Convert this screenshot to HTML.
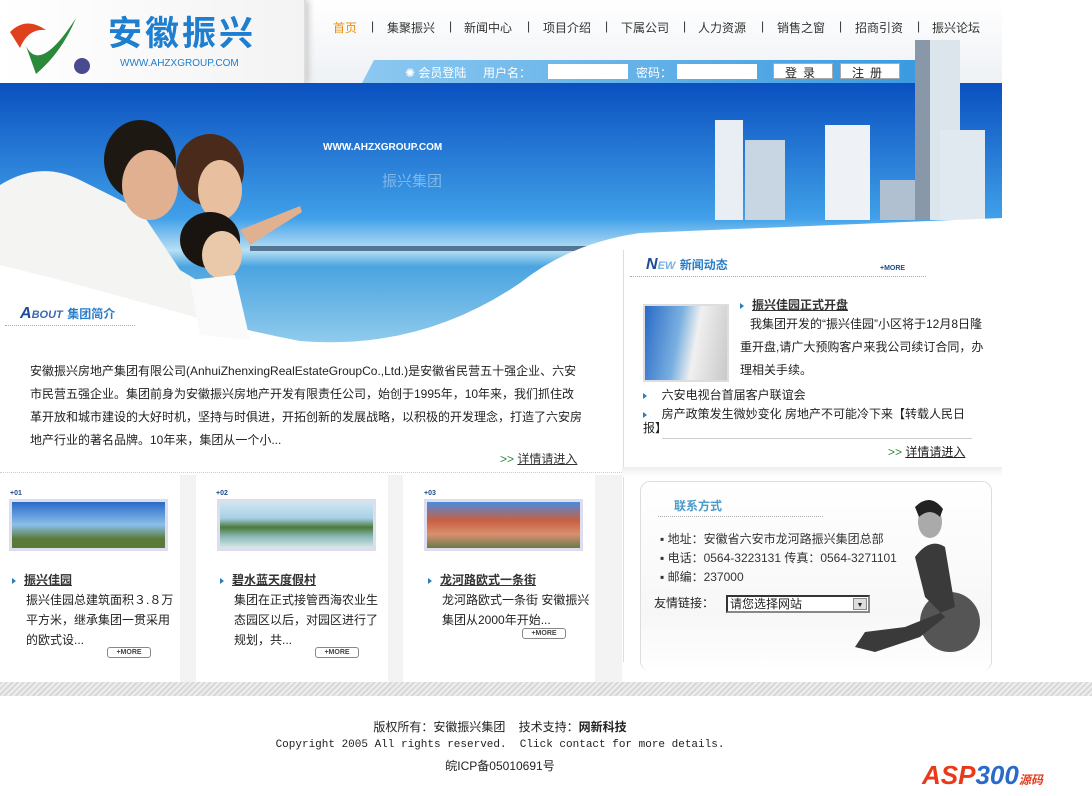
<!DOCTYPE html>
<html><head><meta charset="utf-8"><style>
*{margin:0;padding:0;box-sizing:border-box}
body{width:1092px;height:796px;background:#fff;font-family:"Liberation Sans","Noto Sans CJK SC",sans-serif;font-size:12px;color:#222;position:relative;overflow:hidden}
.a{position:absolute}
.nav span{position:absolute;top:19px;font-size:12px;color:#333}
.u{text-decoration:underline}
.tri{display:inline-block;width:0;height:0;border-left:4px solid #2a7fb8;border-top:3px solid transparent;border-bottom:3px solid transparent;margin-right:8px}
.more{position:absolute;width:44px;height:11px;border:1px solid #888;border-radius:3px;font-size:7px;font-weight:bold;text-align:center;line-height:9px;color:#444;background:#fff}
.txt p{line-height:20px}
</style></head><body>
<!-- header -->
<div class="a" style="left:0;top:0;width:1002px;height:83px;background:linear-gradient(#fff,#eef1f5)"></div>
<div class="a" style="left:0;top:0;width:306px;height:83px;background:linear-gradient(90deg,#fff,#f3f3f3);border-right:2px solid #ddd;box-shadow:3px 0 6px #ccc"></div>
<svg class="a" style="left:6px;top:12px" width="90" height="66"><path d="M4 20 Q20 4 40 18 Q22 16 14 36 Z" fill="#e0401c"/><path d="M20 34 Q34 62 70 6 Q56 40 30 62 Z" fill="#2a8a3a"/><circle cx="76" cy="54" r="8" fill="#4a4a90"/></svg>
<div class="a" style="left:108px;top:14px;font-size:34px;line-height:40px;font-weight:bold;color:#1e7ed0;letter-spacing:3px">安徽振兴</div>
<div class="a" style="left:120px;top:58px;font-size:10px;color:#1e7ed0">WWW.AHZXGROUP.COM</div>
<div class="nav">
<span style="left:333px;color:#e8900a">首页</span><span style="left:371px">|</span>
<span style="left:387px">集聚振兴</span><span style="left:449px">|</span>
<span style="left:464px">新闻中心</span><span style="left:527px">|</span>
<span style="left:543px">项目介绍</span><span style="left:605px">|</span>
<span style="left:621px">下属公司</span><span style="left:683px">|</span>
<span style="left:698px">人力资源</span><span style="left:761px">|</span>
<span style="left:777px">销售之窗</span><span style="left:839px">|</span>
<span style="left:855px">招商引资</span><span style="left:917px">|</span>
<span style="left:932px">振兴论坛</span>
</div>
<div class="a" style="left:362px;top:60px;width:560px;height:23px;background:linear-gradient(90deg,#8cc8f0,#3a9ae0);clip-path:polygon(12px 0,100% 0,100% 100%,0 100%)"></div>
<div class="a" style="left:405px;top:64px;color:#fff;font-size:12px">✺ 会员登陆 &nbsp;&nbsp;&nbsp;&nbsp;用户名：</div>
<div class="a" style="left:548px;top:64px;width:80px;height:15px;background:#fff"></div>
<div class="a" style="left:636px;top:64px;color:#fff">密码：</div>
<div class="a" style="left:677px;top:64px;width:80px;height:15px;background:#fff"></div>
<div class="a" style="left:773px;top:63px;width:60px;height:16px;background:#fff;border:1px solid #aaa;text-align:center;font-size:12px;letter-spacing:6px">登录</div>
<div class="a" style="left:840px;top:63px;width:60px;height:16px;background:#fff;border:1px solid #aaa;text-align:center;font-size:12px;letter-spacing:6px">注册</div>
<!-- banner -->
<svg class="a" style="left:0;top:40px" width="1002" height="313">
<defs><linearGradient id="s" x1="0" y1="0" x2="0" y2="1"><stop offset="0" stop-color="#0a50c0"/><stop offset=".5" stop-color="#40a0e8"/><stop offset=".62" stop-color="#b8e0f4"/><stop offset=".68" stop-color="#4aa4e0"/><stop offset="1" stop-color="#9ad0ee"/></linearGradient></defs>
<rect y="43" width="1002" height="270" fill="url(#s)"/>
<rect x="250" y="206" width="420" height="5" fill="#2a4a6a" opacity=".7"/>
<rect x="715" y="80" width="28" height="100" fill="#e8eef4"/><rect x="745" y="100" width="40" height="80" fill="#c8d6e4"/><rect x="825" y="85" width="45" height="95" fill="#eef2f6"/><rect x="880" y="140" width="35" height="40" fill="#b0c0d0"/>
<rect x="915" y="0" width="30" height="180" fill="#8898a8"/><rect x="930" y="0" width="30" height="180" fill="#dce4ec"/><rect x="940" y="90" width="45" height="90" fill="#e0e8f0"/>
<path d="M0 203 Q150 273 300 301 Q420 311 520 243 Q570 203 640 193 L1002 178 L1002 313 L0 313 Z" fill="#fff"/>
<path d="M0 145 Q40 120 80 140 L140 170 L180 230 L230 260 L240 290 L170 270 L60 240 L0 225 Z" fill="#f4f4f2"/>
<ellipse cx="140" cy="120" rx="36" ry="40" fill="#1e1812"/><ellipse cx="150" cy="145" rx="28" ry="35" fill="#e0b090"/>
<ellipse cx="210" cy="130" rx="34" ry="36" fill="#4a2a1a"/><ellipse cx="220" cy="150" rx="22" ry="30" fill="#e8c0a0"/>
<ellipse cx="210" cy="200" rx="30" ry="28" fill="#1a1410"/><ellipse cx="222" cy="215" rx="20" ry="24" fill="#eac8aa"/>
<path d="M190 240 L235 235 L250 300 L200 295 Z" fill="#fafafa"/>
<path d="M240 190 L300 166 L302 172 L250 205 Z" fill="#e0b090"/>
</svg>
<div class="a" style="left:323px;top:142px;color:#fff;font-size:10px;font-weight:bold">WWW.AHZXGROUP.COM</div>
<div class="a" style="left:382px;top:170px;color:#80b8e8;font-size:15px">振兴集团</div>
<div class="a" style="left:20px;top:305px;color:#1e4a9a;font-size:16px;font-weight:bold;font-style:italic">A<span style="font-size:11px;color:#3a6ab8">BOUT</span> <span style="font-size:12px;font-style:normal;color:#2a7ec8">集团简介</span></div>
<div class="a" style="left:5px;top:325px;width:130px;border-top:1px dotted #aaa"></div>
<div class="a txt" style="left:30px;top:360px;width:555px;font-size:12px;line-height:23px;color:#222">安徽振兴房地产集团有限公司(AnhuiZhenxingRealEstateGroupCo.,Ltd.)是安徽省民营五十强企业、六安市民营五强企业。集团前身为安徽振兴房地产开发有限责任公司，始创于1995年，10年来，我们抓住改革开放和城市建设的大好时机，坚持与时俱进，开拓创新的发展战略，以积极的开发理念，打造了六安房地产行业的著名品牌。10年来，集团从一个小...</div>
<div class="a" style="left:500px;top:450px;color:#333"><span style="color:#2a8a3a">&gt;&gt;</span> <span class="u">详情请进入</span></div>
<div class="a" style="left:0;top:472px;width:622px;border-top:1px dotted #ccc"></div>
<!-- products -->
<div class="a" style="left:0;top:475px;width:622px;height:207px;background:#f3f3f3"></div>
<div class="a" style="left:0;top:475px;width:180px;height:207px;background:#fff"></div>
<div class="a" style="left:196px;top:475px;width:192px;height:207px;background:#fff"></div>
<div class="a" style="left:403px;top:475px;width:192px;height:207px;background:#fff"></div>
<div class="a" style="left:10px;top:490px;font-size:7px;font-weight:bold;color:#1e4a8a">+01</div>
<div class="a" style="left:216px;top:490px;font-size:7px;font-weight:bold;color:#1e4a8a">+02</div>
<div class="a" style="left:424px;top:490px;font-size:7px;font-weight:bold;color:#1e4a8a">+03</div>
<div class="a" style="left:9px;top:499px;width:159px;height:52px;border:3px solid #dde;background:linear-gradient(#2a6ac8,#8ac0e8 50%,#5a7a3a 80%)"></div>
<div class="a" style="left:217px;top:499px;width:159px;height:52px;border:3px solid #dde;background:linear-gradient(#cfe6f0,#a8d0e8 35%,#4a7a3a 55%,#8ab8b8 75%,#d8e8e8)"></div>
<div class="a" style="left:424px;top:499px;width:159px;height:52px;border:3px solid #dde;background:linear-gradient(#4a8ae0,#c86040 40%,#d89070 70%,#6a7a4a)"></div>
<div class="a txt" style="left:12px;top:570px;width:165px"><p><span class="tri"></span><b class="u" style="color:#333">振兴佳园</b></p><p style="padding-left:14px">振兴佳园总建筑面积３.８万平方米，继承集团一贯采用的欧式设...</p></div>
<div class="a txt" style="left:220px;top:570px;width:165px"><p><span class="tri"></span><b class="u" style="color:#333">碧水蓝天度假村</b></p><p style="padding-left:14px">集团在正式接管西海农业生态园区以后，对园区进行了规划，共...</p></div>
<div class="a txt" style="left:428px;top:570px;width:168px"><p><span class="tri"></span><b class="u" style="color:#333">龙河路欧式一条街</b></p><p style="padding-left:14px">龙河路欧式一条街 安徽振兴集团从2000年开始...</p></div>
<div class="more" style="left:107px;top:647px">+MORE</div>
<div class="more" style="left:315px;top:647px">+MORE</div>
<div class="more" style="left:522px;top:628px">+MORE</div>
<!-- news -->
<div class="a" style="left:623px;top:250px;width:1px;height:412px;background:#ddd"></div>
<div class="a" style="left:646px;top:256px;color:#1e4a9a;font-size:16px;font-weight:bold;font-style:italic">N<span style="font-size:11px;color:#7ab0e0">EW</span> <span style="font-size:12px;font-style:normal;color:#2a7ec8">新闻动态</span></div>
<div class="a" style="left:880px;top:265px;font-size:7px;font-weight:bold;color:#1e4a8a">+MORE</div>
<div class="a" style="left:630px;top:276px;width:296px;border-top:1px dotted #aaa"></div>
<div class="a" style="left:643px;top:304px;width:86px;height:78px;border:2px solid #ddd;background:linear-gradient(100deg,#2a6ac8 0,#7ab0e0 40%,#f0f0f0 60%,#c8c8c8)"></div>
<div class="a" style="left:740px;top:296px"><span class="tri"></span><b class="u" style="color:#333">振兴佳园正式开盘</b></div>
<div class="a" style="left:740px;top:313px;width:250px;line-height:23px">&nbsp;&nbsp;&nbsp;我集团开发的“振兴佳园”小区将于12月8日隆重开盘,请广大预购客户来我公司续订合同，办理相关手续。</div>
<div class="a" style="left:643px;top:386px"><span class="tri"></span>&nbsp; 六安电视台首届客户联谊会</div>
<div class="a" style="left:643px;top:407px;width:330px;line-height:14px"><span class="tri"></span>&nbsp; 房产政策发生微妙变化 房地产不可能冷下来【转载人民日报】</div>
<div class="a" style="left:662px;top:438px;width:310px;border-top:1px solid #ccc"></div>
<div class="a" style="left:888px;top:443px"><span style="color:#2a8a3a">&gt;&gt;</span> <span class="u">详情请进入</span></div>
<div class="a" style="left:622px;top:467px;width:380px;height:10px;background:linear-gradient(#eee,#fff)"></div>
<!-- contact -->
<div class="a" style="left:640px;top:481px;width:352px;height:190px;border:1px solid #ddd;border-radius:10px;border-bottom:none;background:linear-gradient(#fff,#f7f7f7 70%,#fff)"></div>
<div class="a" style="left:674px;top:497px;color:#4a9ac8;font-weight:bold;font-size:12px">联系方式</div>
<div class="a" style="left:658px;top:516px;width:165px;border-top:1px dotted #aaa"></div>
<div class="a" style="left:660px;top:530px;line-height:19px;color:#333">▪ 地址：安徽省六安市龙河路振兴集团总部<br>▪ 电话：0564-3223131 传真：0564-3271101<br>▪ 邮编：237000</div>
<div class="a" style="left:654px;top:594px">友情链接：</div>
<div class="a" style="left:726px;top:595px;width:144px;height:18px;border:2px inset #888;background:#fff;padding-left:2px;line-height:14px">请您选择网站<span style="position:absolute;right:1px;top:1px;width:14px;height:12px;background:#ddd;border:1px solid #888;font-size:7px;text-align:center">▼</span></div>
<svg class="a" style="left:845px;top:487px" width="135" height="175"><circle cx="105" cy="135" r="30" fill="#555"/><path d="M70 70 Q85 50 100 60 L110 120 L60 140 L20 145 L10 160 L30 165 L75 150 L100 130 L80 110 Z" fill="#3a3a3a"/><ellipse cx="85" cy="35" rx="12" ry="16" fill="#aaa"/><path d="M70 20 Q85 5 98 22 L95 30 Q85 20 74 30 Z" fill="#222"/></svg>
<!-- footer -->
<div class="a" style="left:0;top:682px;width:1092px;height:14px;background:repeating-linear-gradient(135deg,#d8d8d8 0 2px,#eee 2px 4px)"></div>
<div class="a" style="left:0;top:718px;width:1000px;text-align:center;color:#222">版权所有：安徽振兴集团 &nbsp;&nbsp;&nbsp;技术支持：<b>网新科技</b></div>
<div class="a" style="left:0;top:739px;width:1000px;text-align:center;font-family:'Liberation Mono',monospace;font-size:11px">Copyright 2005 All rights reserved. &nbsp;Click contact for more details.</div>
<div class="a" style="left:0;top:757px;width:1000px;text-align:center">皖ICP备05010691号</div>
<div class="a" style="left:922px;top:760px;font-size:26px;font-weight:bold;font-style:italic;color:#e83a1a">ASP<span style="color:#2a6ac8">300</span><span style="font-size:12px;color:#e83a1a">源码</span></div>
</body></html>
